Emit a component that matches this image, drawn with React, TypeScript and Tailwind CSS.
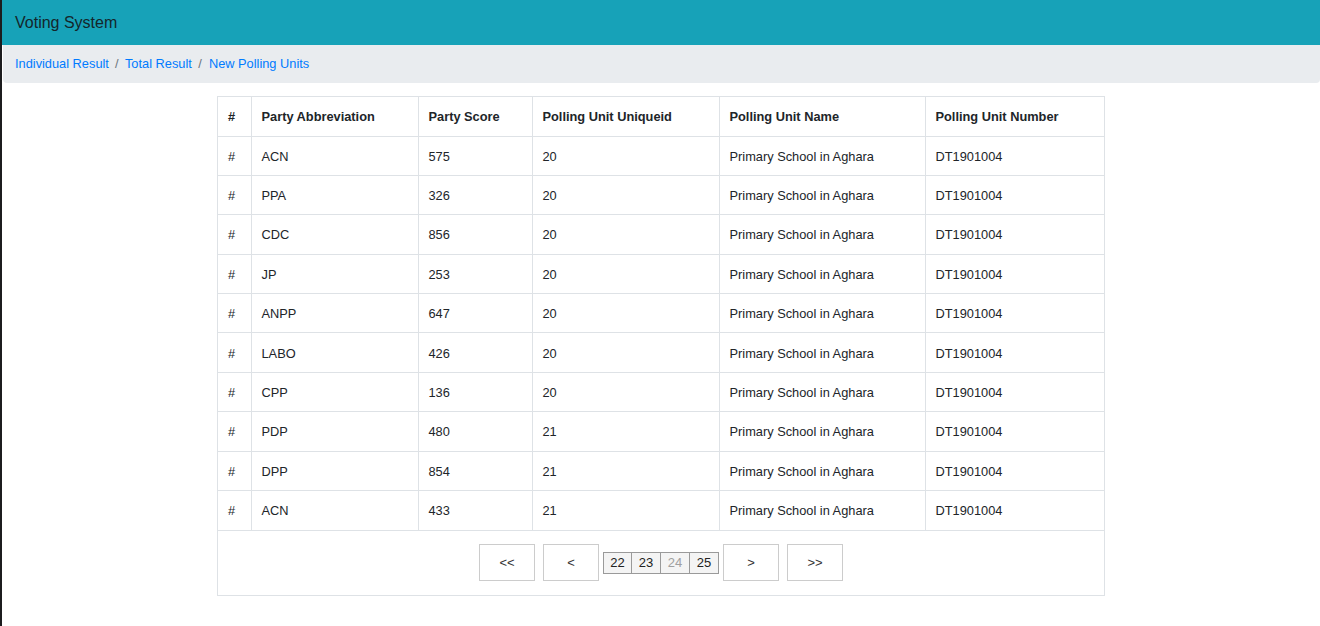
import React from "react";

const rows = [
  ["ACN", "575", "20"],
  ["PPA", "326", "20"],
  ["CDC", "856", "20"],
  ["JP", "253", "20"],
  ["ANPP", "647", "20"],
  ["LABO", "426", "20"],
  ["CPP", "136", "20"],
  ["PDP", "480", "21"],
  ["DPP", "854", "21"],
  ["ACN", "433", "21"],
];

const cols = [
  { label: "#", w: "w-[33px]" },
  { label: "Party Abbreviation", w: "w-[167px]" },
  { label: "Party Score", w: "w-[114px]" },
  { label: "Polling Unit Uniqueid", w: "w-[187px]" },
  { label: "Polling Unit Name", w: "w-[206px]" },
  { label: "Polling Unit Number", w: "w-[180px]" },
];

export default function App() {
  return (
    <div
      className="flex min-h-[626px] bg-white text-[#212529]"
      style={{ fontFamily: '"Liberation Sans", Arial, sans-serif' }}
    >
      <div className="w-[2px] shrink-0 bg-[#1c1c1e]" />
      <div className="flex-1 min-w-0">
        <header className="h-[45px] bg-[#17a2b8] flex items-center pl-[13px]">
          <span className="text-[16px] text-[#14262b]">Voting System</span>
        </header>
        <nav className="ml-[1px] h-[38px] bg-[#e9ecef] rounded-b-[4px] flex items-center pl-[12px] text-[12.8px]">
          <a className="text-[#007bff]">Individual Result</a>
          <span className="pl-[6px] pr-[6.5px] text-[#6c757d]">/</span>
          <a className="text-[#007bff]">Total Result</a>
          <span className="pl-[6.5px] pr-[7px] text-[#6c757d]">/</span>
          <a className="text-[#007bff]">New Polling Units</a>
        </nav>
        <div className="mt-[13px] w-[888px] ml-[215px] border border-[#dee2e6]">
          <table className="w-full border-collapse text-[12.8px] table-fixed">
            <thead>
              <tr className="h-[39px]">
                {cols.map((c, i) => (
                  <th
                    key={i}
                    className={`${c.w} text-left font-bold pl-[10px] pr-[8px] pt-[1px] border-[#dee2e6] ${
                      i > 0 ? "border-l" : ""
                    }`}
                  >
                    {c.label}
                  </th>
                ))}
              </tr>
            </thead>
            <tbody>
              {rows.map((r, i) => (
                <tr key={i} className="h-[39.4px] border-t border-[#dee2e6]">
                  <td className="pl-[10px] pt-[1px]">#</td>
                  <td className="pl-[10px] pt-[1px] border-l border-[#dee2e6]">{r[0]}</td>
                  <td className="pl-[10px] pt-[1px] border-l border-[#dee2e6]">{r[1]}</td>
                  <td className="pl-[10px] pt-[1px] border-l border-[#dee2e6]">{r[2]}</td>
                  <td className="pl-[10px] pt-[1px] border-l border-[#dee2e6]">Primary School in Aghara</td>
                  <td className="pl-[10px] pt-[1px] border-l border-[#dee2e6]">DT1901004</td>
                </tr>
              ))}
            </tbody>
          </table>
          <div className="border-t border-[#dee2e6] h-[65px] flex items-center justify-center text-[13px] text-[#333]">
            <button className="mx-[4px] w-[56px] h-[37px] bg-white border border-[#ccc]">&lt;&lt;</button>
            <button className="mx-[4px] w-[56px] h-[37px] bg-white border border-[#ccc]">&lt;</button>
            <div className="flex h-[22px]">
              {["22", "23", "24", "25"].map((n, i) => (
                <button
                  key={n}
                  className={`w-[29px] h-[22px] bg-[#f4f4f4] border-y border-r border-[#9a9a9a] ${
                    i === 0 ? "border-l" : ""
                  } ${n === "24" ? "text-[#a0a0a0]" : "text-[#222]"}`}
                >
                  {n}
                </button>
              ))}
            </div>
            <button className="mx-[4px] w-[56px] h-[37px] bg-white border border-[#ccc]">&gt;</button>
            <button className="mx-[4px] w-[56px] h-[37px] bg-white border border-[#ccc]">&gt;&gt;</button>
          </div>
        </div>
      </div>
    </div>
  );
}
